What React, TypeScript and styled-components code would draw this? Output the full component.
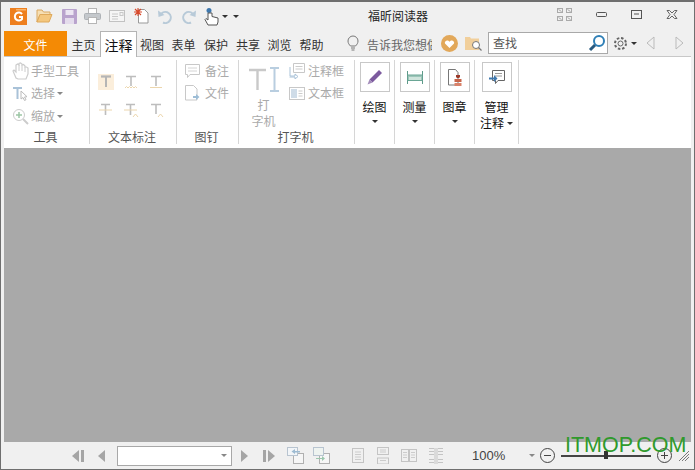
import React from "react";
import styled, { createGlobalStyle } from "styled-components";

const Global = createGlobalStyle`
  html, body { margin: 0; padding: 0; background: #f0f0f0; overflow: hidden; }
  * { box-sizing: border-box; }
`;

const Window = styled.div`
  position: relative;
  width: 695px; height: 470px;
  display: flex; flex-direction: column;
  background: #f0f0f0;
  border: 1px solid #6f6f6f;
  border-top-width: 2px;
  font: 12px/14px "Noto Sans CJK SC", "Liberation Sans", sans-serif;
  color: #444;
  overflow: hidden;
`;
const TitleBar = styled.div`
  display: grid;
  grid-template-columns: 1fr 137px;
  align-items: center;
  position: relative;
  height: 28px;
`;
const Quick = styled.div`display: flex; align-items: center; padding-left: 9px; height: 28px;`;
const Tool = styled.span<{ $l?: number; $w?: number }>`
  display: flex; align-items: center; justify-content: center; flex: none;
  margin-left: ${p => p.$l ?? 0}px;
  width: ${p => (p.$w ? p.$w + "px" : "auto")};
`;
const Title = styled.div`
  position: absolute; left: 367px; top: 7px;
  font-size: 12px; color: #222;
`;
const Controls = styled.div`display: flex; align-items: center; height: 26px; margin-top: -4px;`;

const TabRow = styled.div`display: flex; height: 26px; padding-left: 3px; align-items: flex-end;`;
const FileTab = styled.div`
  width: 63px; height: 25px; background: #f48a05; color: #fff;
  display: flex; align-items: center; justify-content: center; font-size: 12px; padding-top: 3px;
`;
const Tab = styled.div<{ $w: number; $active?: boolean }>`
  width: ${p => p.$w}px; height: ${p => (p.$active ? 26 : 25)}px;
  display: flex; align-items: center; justify-content: center;
  color: ${p => (p.$active ? "#111" : "#333")};
  font-size: ${p => (p.$active ? 14 : 12)}px;
  padding-top: ${p => (p.$active ? 1 : 3)}px;
  background: ${p => (p.$active ? "#fff" : "transparent")};
  border: ${p => (p.$active ? "1px solid #b4b4b4" : "0")};
  border-bottom: 0;
  position: relative; z-index: 1;
  margin-bottom: ${p => (p.$active ? -1 : 0)}px;
`;
const Hint = styled.div`width: 65px; margin-left: 8px; overflow: hidden; white-space: nowrap; color: #666; padding-top: 3px;`;
const SearchBox = styled.div`
  width: 120px; height: 22px; margin-left: 6px; margin-bottom: 1px; background: #fff; border: 1px solid #a9a9a9;
  display: flex; align-items: center; justify-content: space-between; padding: 0 1px 0 4px; color: #555; font-size: 12px;
`;
const TabRight = styled.div`display: flex; align-items: center; margin-left: 19px; height: 26px;`;

const Ribbon = styled.div`
  display: flex; height: 92px; margin: 0 3px; background: #fff;
  border-top: 1px solid #c8c8c8; padding-top: 3px;
`;
const Group = styled.div<{ $w: number }>`
  width: ${p => p.$w}px; height: 84px; flex: none;
  display: flex; flex-direction: column; align-items: stretch;
  border-right: 1px solid #d6d6d6;
`;
const Body = styled.div`flex: 1; min-height: 0;`;
const GroupLabel = styled.div`height: 15px; text-align: center; color: #555; line-height: 15px; padding-right: 2px;`;
const Rows = styled(Body)`display: flex; flex-direction: column; padding: 0 0 0 8px;`;
const Row = styled.div<{ $h?: number; $gap?: number }>`
  display: flex; align-items: center; height: ${p => p.$h ?? 22}px; color: #aaa; gap: ${p => p.$gap ?? 3}px;
`;
const MarkGrid = styled(Body)`
  display: grid; grid-template-columns: repeat(3, 25px); grid-auto-rows: 28px; padding: 8px 0 0 3px; justify-items: center; align-items: center;
`;
const Mark = styled.span<{ $on?: boolean }>`
  width: 16px; height: 16px; display: flex; align-items: center; justify-content: center;
  background: ${p => (p.$on ? "#fbeedb" : "transparent")};
`;
const TypeBody = styled(Body)`display: flex;`;
const TypeMain = styled.div`
  width: 50px; display: flex; flex-direction: column; align-items: center; color: #aaa; padding: 7px 3px 0 2px;
  line-height: 16px; text-align: center;
`;
const TypeText = styled.div`margin-top: 4px;`;
const TypeSide = styled.div`display: flex; flex-direction: column; padding-top: 0;`;
const Big = styled.div`
  display: flex; flex-direction: column; align-items: center; color: #111; padding-top: 2px;
`;
const BigBox = styled.div`
  width: 30px; height: 30px; border: 1px solid #c8c8c8; display: flex; align-items: center; justify-content: center;
  margin-bottom: 7px;
`;
const BigLabel = styled.div`line-height: 16px; display: flex; align-items: center; gap: 3px;`;
const Caret = styled.span`
  width: 0; height: 0; border: 3px solid transparent; border-top: 3px solid #333; border-bottom: 0; display: inline-block;
`;
const GrayCaret = styled(Caret)`border-top-color: #888;`;
const BigCaret = styled(Caret)`margin-top: 5px;`;

const Doc = styled.div`flex: 1; background: #a9a9a9; margin: 0 3px;`;
const Status = styled.div`display: flex; align-items: center; height: 27px; padding-left: 70px; margin-top: 0;`;
const PageBox = styled.div`
  width: 115px; height: 20px; margin-left: 11px; background: #fff; border: 1px solid #a8a8a8;
  display: flex; align-items: center; justify-content: flex-end; padding-right: 4px;
`;
const Zoom = styled.div`font: 13px "Liberation Sans", sans-serif; color: #444; margin-left: 28px; width: 33px;`;
const Slider = styled.div`
  position: relative; width: 90px; height: 2px; background: #444; margin-left: 6px;
`;
const Thumb = styled.span`
  position: absolute; left: 43px; top: -4px; width: 4px; height: 8px; background: #333;
`;
const Watermark = styled.div`
  position: absolute; left: 564px; top: 431px;
  font: 21.5px/24px "Liberation Sans", sans-serif; color: #2f9a2c;
`;

const Svg = ({ w, h, children }: { w: number; h: number; children: React.ReactNode }) => (
  <svg width={w} height={h} viewBox={`0 0 ${w} ${h}`} fill="none">{children}</svg>
);

const Logo = () => (
  <Svg w={17} h={17}>
    <rect width="17" height="17" fill="#ee7f1e" />
    <path d="M12 6 A4 4 0 1 0 12 11 V9 H9" stroke="#fff" strokeWidth="2" />
    <rect x="6" y="1" width="10" height="1.5" fill="#f9b46a" />
  </Svg>
);
const Folder = () => (
  <Svg w={17} h={14}>
    <path d="M1 1h5l1.5 2H14v2.5H4L1 13z" fill="#f6dfb4" stroke="#d9a860" />
    <path d="M4 5.5h12L13 13H1z" fill="#f4c77e" stroke="#dfa95b" />
  </Svg>
);
const Save = () => (
  <Svg w={15} h={15}>
    <rect width="15" height="15" rx="1" fill="#b9a3cd" />
    <rect x="3.5" y="1" width="8" height="5" fill="#ece6f2" />
    <rect x="3" y="9" width="9" height="6" fill="#e4dcec" />
  </Svg>
);
const Printer = () => (
  <Svg w={17} h={16}>
    <rect x="4.5" y=".5" width="8" height="5" fill="#fff" stroke="#b6b6b6" />
    <rect x=".5" y="5.5" width="16" height="6" rx="1" fill="#c4c8cc" stroke="#aeb2b6" />
    <rect x="4.5" y="9.5" width="8" height="6" fill="#fff" stroke="#b6b6b6" />
  </Svg>
);
const Mail = () => (
  <Svg w={16} h={12}>
    <rect x=".5" y=".5" width="15" height="11" fill="#f5f5f5" stroke="#c2c2c2" />
    <path d="M3 4h6M3 6.500h6M3 9h6" stroke="#c8c8c8" />
    <rect x="11" y="2.500" width="3" height="3" stroke="#c8c8c8" />
  </Svg>
);
const NewDoc = () => (
  <Svg w={15} h={16}>
    <path d="M4.500 1.500h6l3.500 3.500v10h-9.500z" fill="#fff" stroke="#999" />
    <path d="M4 0v8M0 4h8M1 1l6 6M7 1l-6 6" stroke="#d8492b" strokeWidth="1.100" />
  </Svg>
);
const Undo = ({ flip }: { flip?: boolean }) => (
  <svg width="16" height="15" viewBox="0 0 16 15" fill="none" style={flip ? { transform: "scaleX(-1)" } : undefined}>
    <path d="M4.500 4.500 A5.500 5.500 0 1 1 6 13.500" stroke="#b8cad8" strokeWidth="2" />
    <path d="M1 1.500 L1.500 8 L7.500 6z" fill="#b8cad8" />
  </svg>
);
const Touch = () => (
  <Svg w={15} h={19}>
    <circle cx="5" cy="3.500" r="2.500" fill="#3f78ae" />
    <path d="M4 6v7l-2-1.500-1 1L4 18h9l1-3v-4l-6-1.500V6z" fill="#fff" stroke="#555" />
  </Svg>
);
const Expand = () => (
  <Svg w={15} h={13}>
    {[[0, 0], [9, 0], [0, 8], [9, 8]].map(([x, y], i) => (
      <g key={i}>
        <rect x={x + 0.5} y={y + 0.5} width="5" height="4" stroke="#aaa" />
        <path d={`M${x + 1.500} ${y + 1.500}l3 2`} stroke="#aaa" />
      </g>
    ))}
  </Svg>
);
const MinIcon = () => (
  <Svg w={11} h={5}><rect x=".5" y=".5" width="10" height="4" rx="1" stroke="#555" /></Svg>
);
const RestoreIcon = () => (
  <Svg w={11} h={9}><rect x=".5" y=".5" width="10" height="8" stroke="#555" /><path d="M3 4h5" stroke="#555" /></Svg>
);
const CloseIcon = () => (
  <Svg w={12} h={9}><path d="M1 .5h2.500L6 3l2.500-2.500H11L8 4.500l3 4H8.500L6 6 3.500 8.500H1l3-4z" stroke="#666" /></Svg>
);
const Bulb = () => (
  <Svg w={12} h={16}>
    <path d="M3.500 11C2 9.500 1 8 1 6a5 5 0 0 1 10 0c0 2-1 3.500-2.500 5z" stroke="#777" />
    <path d="M4 13h4M4.500 15h3" stroke="#777" />
  </Svg>
);
const Heart = () => (
  <Svg w={17} h={17}>
    <circle cx="8.500" cy="8.500" r="8.500" fill="#e2a85a" />
    <path d="M8.500 13 L4 8.500 C3 6.500 6.500 4 8.500 6.800 C10.500 4 14 6.500 13 8.500z" fill="#fff" />
  </Svg>
);
const FolderSearch = () => (
  <Svg w={17} h={16}>
    <path d="M0 2h5l1 1.500h8V15H0z" fill="#f1cf9b" />
    <circle cx="11" cy="10" r="3.500" fill="#fff" stroke="#777" />
    <path d="M13.500 12.500L16.500 15.500" stroke="#777" strokeWidth="1.300" />
  </Svg>
);
const Magnifier = () => (
  <Svg w={18} h={18}>
    <circle cx="11" cy="7" r="5" stroke="#2f7fb6" strokeWidth="2" fill="#fff" />
    <path d="M7 11L2 16" stroke="#27597f" strokeWidth="3" />
  </Svg>
);
const Gear = () => (
  <Svg w={15} h={15}>
    <circle cx="7.500" cy="7.500" r="2.500" stroke="#666" />
    <circle cx="7.500" cy="7.500" r="5.500" stroke="#666" strokeDasharray="2.500 1.800" strokeWidth="2" />
  </Svg>
);
const Nav = ({ flip, fill = "none", stroke = "#bbb" }: { flip?: boolean; fill?: string; stroke?: string }) => (
  <svg width="9" height="14" viewBox="0 0 9 14" fill="none" style={flip ? { transform: "scaleX(-1)" } : undefined}>
    <path d="M8 1v12L1 7z" fill={fill} stroke={stroke} />
  </svg>
);
const Hand = () => (
  <Svg w={17} h={18}>
    <path d="M4 16L1 9l1-1 2 2V3l1.500-1L7 3V1.500L8.500 1 10 2v1l1.500-.5L13 4v1l1.500 0L16 6v6l-2 5H6z" fill="#fff" stroke="#ccc" strokeWidth="1.200" />
    <path d="M7 3v6M10 3v6M13 5v5" stroke="#ccc" />
  </Svg>
);
const SelectIcon = () => (
  <Svg w={17} h={17}>
    <path d="M1 2h9v2H6.500v10h-2V4H1z" fill="#a9c2d8" />
    <path d="M9 6v8l2-1.500 1.500 3 1.500-.8-1.500-2.700 2.500-.3z" fill="#fff" stroke="#bbb" />
  </Svg>
);
const ZoomIcon = () => (
  <Svg w={17} h={17}>
    <circle cx="7" cy="7" r="5.500" stroke="#ccc" fill="#fff" />
    <path d="M4 7h6M7 4v6" stroke="#9dc6a5" strokeWidth="1.500" />
    <path d="M11 11l5 5" stroke="#ccc" strokeWidth="2" />
  </Svg>
);
const T = ({ variant }: { variant: number }) => (
  <Svg w={16} h={16}>
    {variant === 3 || variant === 4 ? null : <path d="M3 2.500h10M8 2.500V12" stroke="#bdbdbd" strokeWidth="1.600" />}
    {variant === 0 && <path d="M3 2.500h10M8 2.500V13" stroke="#b5b5b5" strokeWidth="2" />}
    {variant === 1 && <path d="M2 14l1.500-1.500L5 14l1.500-1.500L8 14l1.500-1.500L11 14l1.500-1.500L14 14" stroke="#ecd6ad" />}
    {variant === 2 && <path d="M2 13.500h12" stroke="#ecd6ad" />}
    {(variant === 3 || variant === 4) && <path d="M3 2.500h9M7.500 2.500V13" stroke="#bdbdbd" strokeWidth="1.600" />}
    {(variant === 3 || variant === 4) && <path d="M1 8h13" stroke="#ecd6ad" />}
    {(variant === 4 || variant === 5) && <path d="M10 15l2.500-3 2.500 3" stroke="#ecd6ad" />}
  </Svg>
);
const Note = () => (
  <Svg w={15} h={14}>
    <path d="M.5.500h14v10H5l-2.500 3v-3H.5z" stroke="#c8c8c8" />
    <path d="M3 4h9M3 7h9" stroke="#d4d4d4" />
  </Svg>
);
const FileIcon = () => (
  <Svg w={15} h={16}>
    <path d="M.5.500h8l3.500 3.500v11H.5z" stroke="#c8c8c8" fill="#fff" />
    <path d="M8 11h3V9l3.500 3-3.500 3v-2H8z" fill="#9dbdd6" />
  </Svg>
);
const TypeIcon = () => (
  <Svg w={32} h={26}>
    <path d="M1 3h17M9.500 3v20" stroke="#c9c9c9" strokeWidth="2.400" />
    <path d="M22 1h9M22 24h9M26.500 1v23" stroke="#b9cee0" strokeWidth="2" />
  </Svg>
);
const CommentBox = () => (
  <Svg w={16} h={16}>
    <path d="M4.500.500h11v9h-11z" stroke="#c8c8c8" />
    <path d="M6.500 3.500h7M6.500 6h7" stroke="#ccc" />
    <path d="M1 4v9h5V11l3 2.500-3 2.500v-2H.5" stroke="#a9c2d8" />
  </Svg>
);
const TextBoxIcon = () => (
  <Svg w={16} h={13}>
    <rect x=".5" y=".5" width="15" height="12" stroke="#c8c8c8" />
    <rect x="2" y="2" width="6" height="9" fill="#cfdce8" />
    <path d="M9.500 4h4M9.500 6.500h4M9.500 9h4" stroke="#ccc" />
  </Svg>
);
const Pen = () => (
  <Svg w={18} h={18}>
    <path d="M3.500 11.500L13 2l3 3-9.500 9.500z" fill="#7c5a9e" />
    <path d="M3.500 11.500L1.500 16.500l5-2z" fill="#a38cba" />
  </Svg>
);
const Ruler = () => (
  <Svg w={16} h={13}>
    <path d="M.5 0v13M15.500 0v13" stroke="#5e9a8a" />
    <rect x="1" y="4" width="14" height="5.500" fill="#cfe4dc" stroke="#6aa695" />
    <path d="M3 4v2M5 4v2M7 4v2M9 4v2M11 4v2M13 4v2" stroke="#6aa695" />
  </Svg>
);
const Stamp = () => (
  <Svg w={15} h={17}>
    <path d="M1.500.500h7l2.500 3v12.500h-9.500z" stroke="#777" fill="#fff" />
    <path d="M9 6h4v2l-1 1h-2L9 8z" fill="#9c3b2b" />
    <rect x="7.500" y="10" width="7" height="3" fill="#c8654a" />
    <rect x="7.500" y="14" width="7" height="3" fill="#d9826a" />
  </Svg>
);
const Manage = () => (
  <Svg w={16} h={15}>
    <path d="M3.500.500h12v10H9L6.500 13.500v-3H3.500z" stroke="#666" fill="#fff" />
    <path d="M6 3.500h7M6 6h7" stroke="#999" />
    <path d="M0 7.500h5V5l3.500 3.500L5 12V9.500H0z" fill="#3f78ae" />
  </Svg>
);
const First = ({ flip }: { flip?: boolean }) => (
  <svg width="13" height="14" viewBox="0 0 13 14" style={flip ? { transform: "scaleX(-1)" } : undefined}>
    <path d="M8 1v12L1 7z" fill="#a5a5a5" /><rect x="10" y="1" width="3" height="12" fill="#a5a5a5" />
  </svg>
);
const Prev = ({ flip }: { flip?: boolean }) => (
  <svg width="9" height="14" viewBox="0 0 9 14" style={flip ? { transform: "scaleX(-1)" } : undefined}>
    <path d="M8 1v12L1 7z" fill="#a5a5a5" />
  </svg>
);
const Swap = ({ alt }: { alt?: boolean }) => (
  <Svg w={17} h={17}>
    <rect x="6.500" y="6.500" width="10" height="10" fill="#f6f6f6" stroke="#b0b0b0" />
    <rect x=".5" y=".5" width="10" height="8" fill={alt ? "#eef3f0" : "#f2f5f8"} stroke="#b8c4d0" />
    <path d={alt ? "M3 11h6V9l3 2.500-3 2.500v-2H3z" : "M13 4H8V2L4.500 4.500 8 7V5.500h5z"} fill={alt ? "#9cc7ae" : "#9dbbd2"} />
  </Svg>
);
const Page1 = () => (
  <Svg w={12} h={15}><rect x=".5" y=".5" width="11" height="14" stroke="#c4c4c4" /><path d="M3 4h6M3 6.500h6M3 9h6M3 11.500h6" stroke="#ccc" /></Svg>
);
const Page2 = () => (
  <Svg w={12} h={17}><rect x=".5" y=".5" width="11" height="7" stroke="#c4c4c4" /><rect x=".5" y="11" width="11" height="6" stroke="#c4c4c4" /><path d="M3 3h6M3 5h6M3 13.500h6" stroke="#ccc" /></Svg>
);
const Page3 = () => (
  <Svg w={16} h={13}><rect x=".5" y=".5" width="7" height="12" stroke="#c4c4c4" /><rect x="8.500" y=".5" width="7" height="12" stroke="#c4c4c4" /><path d="M2 3.500h4M2 6h4M2 8.500h4M10 3.500h4M10 6h4M10 8.500h4" stroke="#ccc" /></Svg>
);
const Page4 = () => (
  <Svg w={16} h={17}><path d="M7 1v16M9 1v16M1 1.500h5M1 4.500h5M1 7.500h5M1 12.500h5M1 15.500h5M10 1.500h5M10 4.500h5M10 7.500h5M10 12.500h5M10 15.500h5" stroke="#c4c4c4" /></Svg>
);
const Circle = ({ plus }: { plus?: boolean }) => (
  <Svg w={15} h={15}>
    <circle cx="7.500" cy="7.500" r="7" stroke="#444" />
    <path d={plus ? "M4 7.500h7M7.500 4v7" : "M4 7.500h7"} stroke="#444" />
  </Svg>
);
const Grip = () => (
  <Svg w={12} h={12}>
    <path d="M1 11L11 1M4 11l7-7M7 11l4-4" stroke="#777" />
  </Svg>
);

const tabs: [string, number, boolean?][] = [
  ["主页", 33], ["注释", 37, true], ["视图", 30], ["表单", 33], ["保护", 32], ["共享", 32], ["浏览", 31], ["帮助", 33],
];

export default function App() {
  return (
    <Window>
      <Global />
      <TitleBar>
        <Quick>
          <Tool><Logo /></Tool>
          <Tool $l={9}><Folder /></Tool>
          <Tool $l={9}><Save /></Tool>
          <Tool $l={7}><Printer /></Tool>
          <Tool $l={8}><Mail /></Tool>
          <Tool $l={9}><NewDoc /></Tool>
          <Tool $l={8}><Undo /></Tool>
          <Tool $l={8}><Undo flip /></Tool>
          <Tool $l={7}><Touch /></Tool>
          <Tool $l={3}><Caret /></Tool>
          <Tool $l={5}><Caret /></Tool>
        </Quick>
        <Title>福昕阅读器</Title>
        <Controls>
          <Tool $w={15}><Expand /></Tool>
          <Tool $l={22} $w={14}><MinIcon /></Tool>
          <Tool $l={21} $w={14}><RestoreIcon /></Tool>
          <Tool $l={22} $w={14}><CloseIcon /></Tool>
        </Controls>
      </TitleBar>
      <TabRow>
        <FileTab>文件</FileTab>
        {tabs.map(([t, w, a]) => <Tab key={t} $w={w} $active={a}>{t}</Tab>)}
        <TabRight>
          <Tool><Bulb /></Tool>
          <Hint>告诉我您想做什么</Hint>
          <Tool $l={9}><Heart /></Tool>
          <Tool $l={7}><FolderSearch /></Tool>
          <SearchBox>查找<Magnifier /></SearchBox>
          <Tool $l={5}><Gear /></Tool>
          <Tool $l={3}><Caret /></Tool>
          <Tool $l={9}><Nav /></Tool>
          <Tool $l={20}><Nav flip /></Tool>
        </TabRight>
      </TabRow>
      <Ribbon>
        <Group $w={86}>
          <Rows>
            <Row $gap={2}><Hand />手型工具</Row>
            <Row $gap={2}><SelectIcon />选择 <GrayCaret /></Row>
            <Row $gap={2} $h={24}><ZoomIcon />缩放 <GrayCaret /></Row>
          </Rows>
          <GroupLabel>工具</GroupLabel>
        </Group>
        <Group $w={87}>
          <MarkGrid>
            <Mark $on><T variant={0} /></Mark>
            <Mark><T variant={1} /></Mark>
            <Mark><T variant={2} /></Mark>
            <Mark><T variant={3} /></Mark>
            <Mark><T variant={4} /></Mark>
            <Mark><T variant={5} /></Mark>
          </MarkGrid>
          <GroupLabel>文本标注</GroupLabel>
        </Group>
        <Group $w={62}>
          <Rows>
            <Row $gap={5}><Note />备注</Row>
            <Row $gap={5}><FileIcon />文件</Row>
          </Rows>
          <GroupLabel>图钉</GroupLabel>
        </Group>
        <Group $w={116}>
          <TypeBody>
            <TypeMain>
              <TypeIcon />
              <TypeText>打<br />字机</TypeText>
            </TypeMain>
            <TypeSide>
              <Row><CommentBox />注释框</Row>
              <Row><TextBoxIcon />文本框</Row>
            </TypeSide>
          </TypeBody>
          <GroupLabel>打字机</GroupLabel>
        </Group>
        <Group $w={40}>
          <Big><BigBox><Pen /></BigBox><BigLabel>绘图</BigLabel><BigCaret /></Big>
        </Group>
        <Group $w={40}>
          <Big><BigBox><Ruler /></BigBox><BigLabel>测量</BigLabel><BigCaret /></Big>
        </Group>
        <Group $w={40}>
          <Big><BigBox><Stamp /></BigBox><BigLabel>图章</BigLabel><BigCaret /></Big>
        </Group>
        <Group $w={44}>
          <Big><BigBox><Manage /></BigBox><BigLabel>管理</BigLabel><BigLabel>注释<Caret /></BigLabel></Big>
        </Group>
      </Ribbon>
      <Doc />
      <Status>
        <Tool><First /></Tool>
        <Tool $l={13}><Prev /></Tool>
        <PageBox><GrayCaret /></PageBox>
        <Tool $l={8}><Prev flip /></Tool>
        <Tool $l={14}><First flip /></Tool>
        <Tool $l={11}><Swap /></Tool>
        <Tool $l={9}><Swap alt /></Tool>
        <Tool $l={22}><Page1 /></Tool>
        <Tool $l={13}><Page2 /></Tool>
        <Tool $l={12}><Page3 /></Tool>
        <Tool $l={11}><Page4 /></Tool>
        <Zoom>100%</Zoom>
        <Tool $l={24}><GrayCaret /></Tool>
        <Tool $l={5}><Circle /></Tool>
        <Slider><Thumb /></Slider>
        <Tool $l={6}><Circle plus /></Tool>
        <Tool $l={6}><Grip /></Tool>
      </Status>
      <Watermark>ITMOP.COM</Watermark>
    </Window>
  );
}
